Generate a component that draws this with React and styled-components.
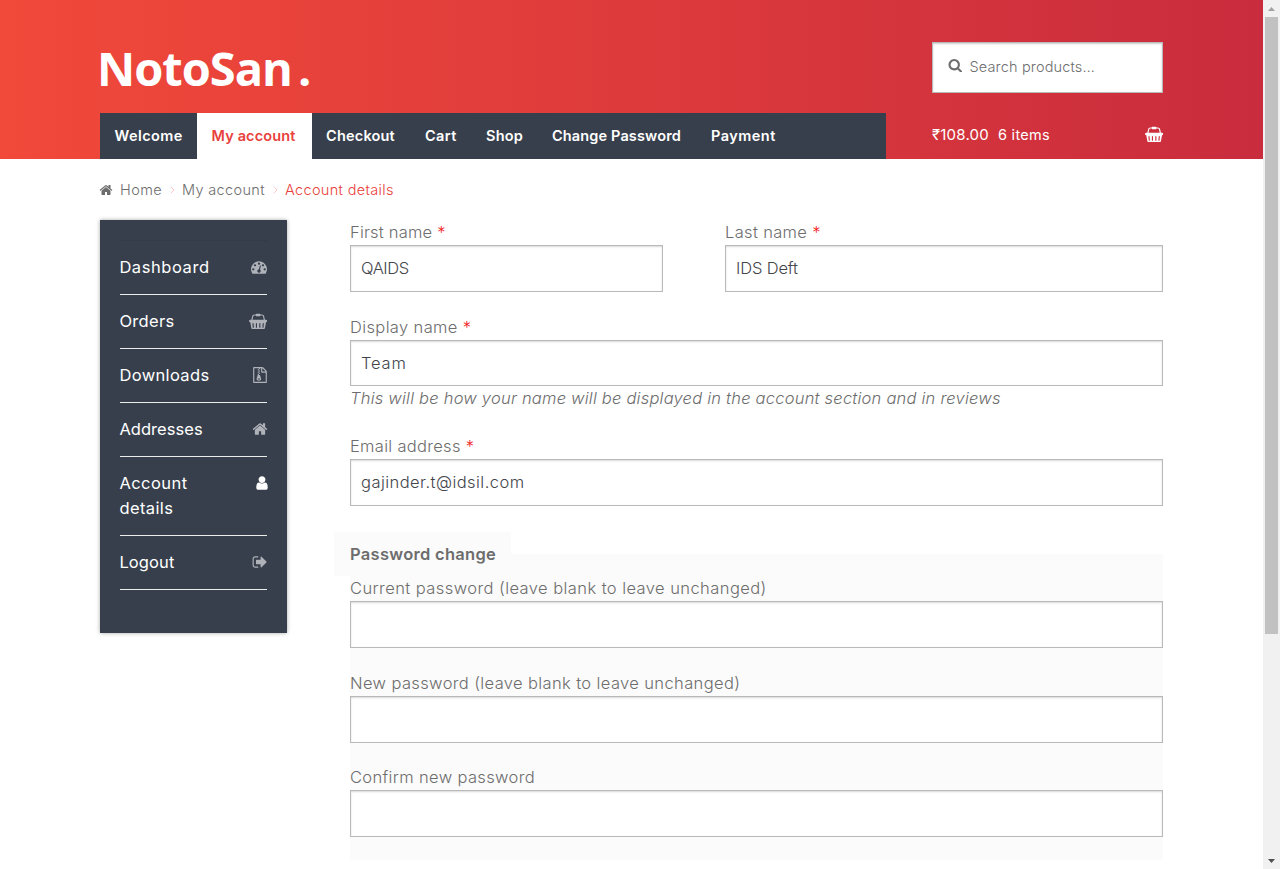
import React from "react";
import styled, { createGlobalStyle } from "styled-components";

const Global = createGlobalStyle`
  * { box-sizing: border-box; }
  html, body { margin: 0; padding: 0; }
  body {
    font-family: Inter, "Open Sans", sans-serif;
    font-size: 16.5px;
    font-weight: 300;
    line-height: 25px;
    color: #6d6d6d;
    background: #fff;
    overflow: hidden;
  }
`;

const Window = styled.div`
  display: flex;
  width: 1280px;
  height: 869px;
  overflow: hidden;
`;

const Page = styled.div`
  width: 1263px;
  flex: none;
`;

const Text = styled.span`
  letter-spacing: ${(p) => p.$ls || 0}px;
  white-space: nowrap;
`;

/* ---------- header ---------- */

const Header = styled.header`
  height: 159px;
  padding: 0 100px;
  display: flex;
  justify-content: space-between;
  background: linear-gradient(to right, #f1493a, #c92c3d);
`;

const HeaderLeft = styled.div`
  width: 786px;
  display: flex;
  flex-direction: column;
  justify-content: space-between;
`;

const Logo = styled.div`
  margin: 40px 0 0 -3px;
  display: flex;
  align-items: baseline;
  gap: 6px;
  height: 56px;
  line-height: 56px;
  font-family: "Open Sans", "Noto Sans", sans-serif;
  font-size: 47px;
  font-weight: 700;
  letter-spacing: -1px;
  color: #fff;
`;

const Nav = styled.nav`
  display: flex;
  height: 46px;
  background: #373f4d;
`;

const NavItem = styled.a`
  width: ${(p) => p.$w}px;
  padding-left: 14.5px;
  line-height: 46px;
  font-size: 14.5px;
  font-weight: 600;
  color: ${(p) => (p.$active ? "#e8413c" : "#fff")};
  background: ${(p) => (p.$active ? "#fff" : "transparent")};
`;

const HeaderRight = styled.div`
  width: 231px;
  padding-top: 42px;
`;

const Search = styled.div`
  display: flex;
  align-items: center;
  height: 51px;
  padding: 0 0 2px 15px;
  gap: 7px;
  font-size: 14.5px;
  background: #fff;
  border: 1px solid #b9b9b9;
  box-shadow: inset 0 1px 2px rgba(0, 0, 0, 0.2);

  svg { margin-top: -3px; }
`;

const Cart = styled.div`
  display: flex;
  align-items: center;
  height: 44px;
  margin-top: 19px;
  color: #fff;
  font-weight: 400;
  font-size: 14.5px;

  svg { margin-left: auto; }
`;

const Amount = styled.span`
  width: 66px;
  font-size: 15px;
  letter-spacing: 0.2px;
`;

/* ---------- breadcrumb ---------- */

const Breadcrumb = styled.nav`
  display: flex;
  align-items: center;
  height: 61px;
  padding: 0 100px;
  font-size: 14.5px;
`;

const Crumb = styled.span`
  width: ${(p) => p.$w}px;
  color: ${(p) => (p.$current ? "#e8413c" : "#6d6d6d")};
`;

const CrumbHome = styled.span`
  display: flex;
  width: 20px;

  svg { margin-left: -1px; }
`;

const Divider = styled.span`
  display: flex;
  width: ${(p) => p.$w}px;
  justify-content: center;
`;

/* ---------- body ---------- */

const Body = styled.div`
  display: flex;
  align-items: flex-start;
  gap: 63px;
  padding: 0 100px;
`;

const Sidebar = styled.aside`
  width: 187px;
  height: 413px;
  padding: 20px;
  background: #373f4d;
  box-shadow: 0 0 4px rgba(0, 0, 0, 0.35);
`;

const Menu = styled.ul`
  margin: 0;
  padding: 0;
  list-style: none;
  border-top: 1px solid #333b49;
`;

const MenuItem = styled.li`
  display: flex;
  justify-content: space-between;
  padding: 14px 0;
  border-bottom: 1px solid #ededee;
  color: #fff;
  font-weight: 400;

  svg {
    flex: none;
    margin-top: 4px;
    margin-right: ${(p) => p.$shift || 0}px;
    opacity: ${(p) => (p.$active ? 1 : 0.6)};
  }
`;

const MenuLabel = styled.span`
  display: flex;
  flex-direction: column;
  margin-left: -0.6px;
`;

const Form = styled.form`
  width: 813px;
  display: flex;
  flex-direction: column;
`;

const Names = styled.div`
  display: grid;
  grid-template-columns: 313px 438px;
  gap: 62px;
`;

const Field = styled.div`
  display: flex;
  flex-direction: column;
  margin-bottom: ${(p) => p.$mb || 0}px;
`;

const Label = styled.label`
  height: 25px;
  letter-spacing: ${(p) => p.$ls}px;
  white-space: nowrap;
`;

const Required = styled.span`
  color: #f02020;
`;

const Input = styled.input`
  width: 100%;
  height: ${(p) => p.$h || 47}px;
  padding: 0 10px 1px;
  font: inherit;
  letter-spacing: ${(p) => p.$ls || 0}px;
  color: #43454b;
  background: #fff;
  border: 1px solid #b9b9b9;
  border-radius: 0;
  outline: none;
  box-shadow: inset 0 1px 2px rgba(0, 0, 0, 0.15);
`;

const Hint = styled.em`
  height: 25px;
  white-space: nowrap;
  letter-spacing: 0.22px;
`;

const Fieldset = styled.section`
  margin-top: 48px;
  height: 306px;
  background: #fbfbfb;
`;

/* The legend straddles the top edge of the fieldset. */
const Legend = styled.div`
  position: relative;
  top: -22px;
  width: 177px;
  height: 44px;
  margin: 0 0 -22px -16px;
  padding-left: 16px;
  line-height: 44px;
  font-weight: 600;
  letter-spacing: 0.29px;
  background: #fbfbfb;
`;

/* ---------- scrollbar ---------- */

const Scrollbar = styled.div`
  width: 17px;
  height: 869px;
  display: flex;
  flex-direction: column;
  align-items: center;
  background: #f1f1f1;
`;

const Thumb = styled.div`
  width: 13px;
  height: 617px;
  background: #c1c1c1;
`;

const Arrow = styled.div`
  height: 17px;
  display: flex;
  align-items: center;
  margin-top: ${(p) => (p.$down ? "auto" : 0)};
`;

/* ---------- icons ---------- */

const ICONS = {
  home: [1792, "M1472 992v480q0 26-19 45t-45 19h-384v-384h-256v384h-384q-26 0-45-19t-19-45v-480q0-1 .5-3t.5-3l575-474 575 474q1 2 1 6zm223-69l-62 74q-8 9-21 11h-3q-13 0-21-7l-692-577-692 577q-12 8-24 7-13-2-21-11l-62-74q-8-10-7-23.5t11-21.5l719-599q32-26 76-26t76 26l244 204v-195q0-14 9-23t23-9h192q14 0 23 9t9 23v408l219 182q10 8 11 21.5t-7 23.5z"],
  search: [1792, "M1216 832q0-185-131.5-316.5t-316.5-131.5-316.5 131.5-131.5 316.5 131.5 316.5 316.5 131.5 316.5-131.5 131.5-316.5zm512 832q0 52-38 90t-90 38q-54 0-90-38l-343-342q-179 124-399 124-143 0-273.5-55.5t-225-150-150-225-55.5-273.5 55.5-273.5 150-225 225-150 273.5-55.5 273.5 55.5 225 150 150 225 55.5 273.5q0 220-124 399l343 343q37 37 37 90z"],
  user: [1792, "M1536 1399q0 109-62.5 187t-150.5 78h-854q-88 0-150.5-78t-62.5-187q0-85 8.5-160.5t31.5-152 58.5-131 94-89 134.5-34.5q131 128 313 128t313-128q76 0 134.5 34.5t94 89 58.5 131 31.5 152 8.5 160.5zm-256-887q0 159-112.5 271.5t-271.5 112.5-271.5-112.5-112.5-271.5 112.5-271.5 271.5-112.5 271.5 112.5 112.5 271.5z"],
  logout: [1792, "M704 1440q0 4 1 20t.5 26.5-3 23.5-10 19.5-20.5 6.5h-320q-119 0-203.5-84.5t-84.5-203.5v-704q0-119 84.5-203.5t203.5-84.5h320q13 0 22.5 9.5t9.5 22.5q0 4 1 20t.5 26.5-3 23.5-10 19.5-20.5 6.5h-320q-66 0-113 47t-47 113v704q0 66 47 113t113 47h312l11.5 1 11.5 3 8 5.5 7 9 2 13.5zm928-544q0 26-19 45l-544 544q-19 19-45 19t-45-19-19-45v-288h-448q-26 0-45-19t-19-45v-384q0-26 19-45t45-19h448v-288q0-26 19-45t45-19 45 19l544 544q19 19 19 45z"],
  dashboard: [1792, "M384 1152q0-53-37.5-90.5t-90.5-37.5-90.5 37.5-37.5 90.5 37.5 90.5 90.5 37.5 90.5-37.5 37.5-90.5zm192-448q0-53-37.5-90.5t-90.5-37.5-90.5 37.5-37.5 90.5 37.5 90.5 90.5 37.5 90.5-37.5 37.5-90.5zm428 481l101-382q6-26-7.5-48.5t-38.5-29.5-48 6.5-30 39.5l-101 382q-60 5-107 43.5t-63 98.5q-20 77 20 146t117 89 146-20 89-117q16-60-6-117t-72-91zm660-33q0-53-37.5-90.5t-90.5-37.5-90.5 37.5-37.5 90.5 37.5 90.5 90.5 37.5 90.5-37.5 37.5-90.5zm-640-640q0-53-37.5-90.5t-90.5-37.5-90.5 37.5-37.5 90.5 37.5 90.5 90.5 37.5 90.5-37.5 37.5-90.5zm448 192q0-53-37.5-90.5t-90.5-37.5-90.5 37.5-37.5 90.5 37.5 90.5 90.5 37.5 90.5-37.5 37.5-90.5zm320 448q0 261-141 483-19 29-54 29h-1402q-35 0-54-29-141-221-141-483 0-182 71-348t191-286 286-191 348-71 348 71 286 191 191 286 71 348z"],
  archive: [1792, "M768 384v-128h-128v128h128zm128 128v-128h-128v128h128zm-128 128v-128h-128v128h128zm128 128v-128h-128v128h128zm700-388q28 28 48 76t20 88v1152q0 40-28 68t-68 28h-1344q-40 0-68-28t-28-68v-1600q0-40 28-68t68-28h896q40 0 88 20t76 48zm-444-244v376h376q-10-29-22-41l-313-313q-12-12-41-22zm384 1528v-1024h-416q-40 0-68-28t-28-68v-416h-128v128h-128v-128h-512v1536h1280zm-627-721l107 349q8 27 8 52 0 83-72.5 137.5t-183.5 54.5-183.5-54.5-72.5-137.5q0-25 8-52 21-63 120-396v-128h128v128h79q22 0 39 13t23 34zm-141 465q53 0 90.5-19t37.5-45-37.5-45-90.5-19-90.5 19-37.5 45 37.5 45 90.5 19z"],
  basket: [2048, "M1920 768q53 0 90.5 37.5t37.5 90.5-37.5 90.5-90.5 37.5h-15l-115 662q-8 46-44 76t-82 30h-1280q-46 0-82-30t-44-76l-115-662h-15q-53 0-90.5-37.5t-37.5-90.5 37.5-90.5 90.5-37.5h1792zm-1435 896q26-2 43.5-22.5t15.5-46.5l-32-416q-2-26-22.5-43.5t-46.5-15.5-43.5 22.5-15.5 46.5l32 416q2 25 20.5 42t43.5 17h5zm411-64v-416q0-26-19-45t-45-19-45 19-19 45v416q0 26 19 45t45 19 45-19 19-45zm384 0v-416q0-26-19-45t-45-19-45 19-19 45v416q0 26 19 45t45 19 45-19 19-45zm352 5l32-416q2-26-15.5-46.5t-43.5-22.5-46.5 15.5-22.5 43.5l-32 416q-2 26 15.5 46.5t43.5 22.5h5q25 0 43.5-17t20.5-42zm-1156-1217l-93 412h-132l101-441q19-88 89-143.5t160-55.5h167q0-26 19-45t45-19h384q26 0 45 19t19 45h167q90 0 160 55.5t89 143.5l101 441h-132l-93-412q-11-44-45.5-72t-79.5-28h-167q0 26-19 45t-45 19h-384q-26 0-45-19t-19-45h-167q-45 0-79.5 28t-45.5 72z"],
};

function Icon({ name, size = 16, color = "currentColor" }) {
  const [w, d] = ICONS[name];
  return (
    <svg width={(size * w) / 1792} height={size} viewBox={`0 0 ${w} 1792`} fill={color}>
      <path d={d} />
    </svg>
  );
}

const Chevron = ({ w }) => (
  <Divider $w={w}>
    <svg width="5" height="8" viewBox="0 0 5 8" fill="none" stroke="#f9c9c6">
      <path d="M0.8 0.8L4 4L0.8 7.2" />
    </svg>
  </Divider>
);

const NAV = [
  ["Welcome", 97, 0.4],
  ["My account", 114.5, 0.15],
  ["Checkout", 99, 0.2],
  ["Cart", 61, 0.42],
  ["Shop", 66, 0.22],
  ["Change Password", 159, 0.14],
  ["Payment", 96, 0.48],
];

const MENU = [
  ["dashboard", 0, [["Dashboard", 0.56]]],
  ["basket", 0, [["Orders", 0.3]]],
  ["archive", -1, [["Downloads", 0.36]]],
  ["home", -0.5, [["Addresses", 0.04]]],
  ["user", -2.5, [["Account", 0.44], ["details", 0.4]]],
  ["logout", -1, [["Logout", 0.12]]],
];

function TextField({ label, ls, required, value = "", vls, h, mb, type = "text", children }) {
  return (
    <Field $mb={mb}>
      <Label $ls={ls}>
        {label}
        {required && <Required> *</Required>}
      </Label>
      <Input type={type} defaultValue={value} $ls={vls} $h={h} />
      {children}
    </Field>
  );
}

export default function App() {
  return (
    <>
      <Global />
      <Window>
        <Page>
          <Header>
            <HeaderLeft>
              <Logo>
                <span>NotoSan</span>
                <span>.</span>
              </Logo>
              <Nav>
                {NAV.map(([t, w, ls]) => (
                  <NavItem key={t} $w={w} $active={t === "My account"}>
                    <Text $ls={ls}>{t}</Text>
                  </NavItem>
                ))}
              </Nav>
            </HeaderLeft>
            <HeaderRight>
              <Search>
                <Icon name="search" size={14.5} />
                <Text $ls={0.15}>Search products…</Text>
              </Search>
              <Cart>
                <Amount>₹108.00</Amount>
                <Text $ls={0.27}>6 items</Text>
                <Icon name="basket" size={16} />
              </Cart>
            </HeaderRight>
          </Header>

          <Breadcrumb>
            <CrumbHome>
              <Icon name="home" size={14} />
            </CrumbHome>
            <Crumb $w={42}><Text $ls={0.4}>Home</Text></Crumb>
            <Chevron w={20} />
            <Crumb $w={83}><Text $ls={0.35}>My account</Text></Crumb>
            <Chevron w={20} />
            <Crumb $current><Text $ls={0.34}>Account details</Text></Crumb>
          </Breadcrumb>

          <Body>
            <Sidebar>
              <Menu>
                {MENU.map(([icon, shift, words]) => (
                  <MenuItem key={icon} $active={icon === "user"} $shift={shift}>
                    <MenuLabel>
                      {words.map(([w, ls]) => (
                        <Text key={w} $ls={ls}>{w}</Text>
                      ))}
                    </MenuLabel>
                    <Icon name={icon} />
                  </MenuItem>
                ))}
              </Menu>
            </Sidebar>

            <Form>
              <Names>
                <TextField label="First name" ls={0.2} required value="QAIDS" vls={-0.4} mb={23} />
                <TextField label="Last name" ls={0.34} required value="IDS Deft" vls={-0.15} mb={23} />
              </Names>
              <TextField label="Display name" ls={0.37} required value="Team" vls={0.8} h={46} mb={23}>
                <Hint>This will be how your name will be displayed in the account section and in reviews</Hint>
              </TextField>
              <TextField label="Email address" ls={0.3} required value="gajinder.t@idsil.com" vls={0.45} />
              <Fieldset>
                <Legend>Password change</Legend>
                <TextField type="password" label="Current password (leave blank to leave unchanged)" ls={0.43} mb={23} />
                <TextField type="password" label="New password (leave blank to leave unchanged)" ls={0.38} mb={22} />
                <TextField type="password" label="Confirm new password" ls={0.35} />
              </Fieldset>
            </Form>
          </Body>
        </Page>

        <Scrollbar>
          <Arrow>
            <svg width="7" height="4" viewBox="0 0 7 4" fill="#a3a3a3"><path d="M0 4L3.5 0L7 4z" /></svg>
          </Arrow>
          <Thumb />
          <Arrow $down>
            <svg width="7" height="4" viewBox="0 0 7 4" fill="#505050"><path d="M0 0L3.5 4L7 0z" /></svg>
          </Arrow>
        </Scrollbar>
      </Window>
    </>
  );
}
